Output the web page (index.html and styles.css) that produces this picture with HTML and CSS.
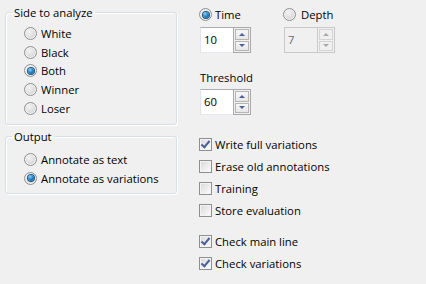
FILE: index.html
```html
<!DOCTYPE html>
<html>
<head>
<meta charset="utf-8">
<link rel="stylesheet" href="styles.css">
</head>
<body>
<div class="dialog">
  <div class="left">
    <fieldset class="group group-side">
      <legend>Side to analyze</legend>
      <div class="options">
        <label class="opt"><span class="radio"></span>White</label>
        <label class="opt"><span class="radio"></span>Black</label>
        <label class="opt"><span class="radio on"></span>Both</label>
        <label class="opt"><span class="radio"></span>Winner</label>
        <label class="opt"><span class="radio"></span>Loser</label>
      </div>
    </fieldset>
    <fieldset class="group group-out">
      <legend>Output</legend>
      <div class="options">
        <label class="opt"><span class="radio"></span>Annotate as text</label>
        <label class="opt"><span class="radio on"></span>Annotate as variations</label>
      </div>
    </fieldset>
  </div>
  <div class="right">
    <div class="mode">
      <div class="mode-col">
        <label class="opt top-opt"><span class="radio on"></span>Time</label>
        <div class="spin"><span class="val">10</span><span class="btns"><span class="btn up"></span><span class="btn down"></span></span></div>
      </div>
      <div class="mode-col">
        <label class="opt top-opt depth"><span class="radio"></span>Depth</label>
        <div class="spin disabled"><span class="val">7</span><span class="btns"><span class="btn up"></span><span class="btn down"></span></span></div>
      </div>
    </div>
    <div class="thr-label">Threshold</div>
    <div class="spin thr"><span class="val">60</span><span class="btns"><span class="btn up"></span><span class="btn down"></span></span></div>
    <div class="checks first">
      <label class="chk"><span class="box on"></span>Write full variations</label>
      <label class="chk"><span class="box"></span>Erase old annotations</label>
      <label class="chk"><span class="box"></span>Training</label>
      <label class="chk"><span class="box"></span>Store evaluation</label>
    </div>
    <div class="checks second">
      <label class="chk"><span class="box on"></span>Check main line</label>
      <label class="chk"><span class="box on"></span>Check variations</label>
    </div>
  </div>
</div>
</body>
</html>
```
FILE: styles.css
```css
html, body {
  margin: 0;
  padding: 0;
  background: #f0f0f0;
  width: 426px;
  height: 284px;
  overflow: hidden;
}
body {
  font-family: "Open Sans", "Noto Sans", sans-serif;
  font-size: 11.3px;
  color: #000;
}
.dialog {
  display: flex;
  padding: 5px 0 0 5px;
}
.left {
  width: 172px;
  display: flex;
  flex-direction: column;
}
.group {
  margin: 0;
  padding: 0;
  border: 1px solid #d5dfe5;
  border-radius: 3px;
  box-shadow: inset 1px 1px 0 #fff, 1px 1px 0 #fff;
}
.group legend {
  margin-left: 6px;
  padding: 0 2px;
  line-height: 15px;
  height: 15px;
}
.group-side { height: 120px; box-sizing: border-box; }
.group-out { height: 65px; box-sizing: border-box; margin-top: 4px; }
.options {
  display: flex;
  flex-direction: column;
  padding: 4px 0 0 18px;
}
.group-out .options { padding-top: 6px; }
.opt {
  display: flex;
  align-items: center;
  height: 18.75px;
  gap: 4px;
}
.radio {
  width: 13px;
  height: 13px;
  box-sizing: border-box;
  border-radius: 50%;
  border: 1px solid #8e8f8f;
  background: radial-gradient(circle at 40% 35%, #f4f4f4 0%, #dcdcdc 55%, #c4c4c4 100%);
  box-shadow: inset 0 0 0 1px #f4f4f4;
  flex: none;
  display: flex;
  align-items: center;
  justify-content: center;
}
.radio.on::after {
  content: "";
  width: 6px;
  height: 6px;
  border-radius: 50%;
  background: radial-gradient(circle at 35% 30%, #8ad3f7 0%, #2b88c7 45%, #0a4e86 100%);
  box-shadow: 0 0 0 1px #1a5a8c;
}
.right {
  margin-left: 22px;
  display: flex;
  flex-direction: column;
}
.mode {
  display: flex;
}
.mode-col {
  width: 84px;
  display: flex;
  flex-direction: column;
}
.top-opt { height: 19px; gap: 3px; }
.depth { gap: 5px; }
.spin {
  width: 51px;
  height: 26px;
  box-sizing: border-box;
  margin: 3px 0 0 1px;
  display: flex;
  background: #fff;
  border: 1px solid #abadb3;
  border-left-color: #e2e3ea;
  border-bottom-color: #e3e9ef;
}
.spin.thr { margin-top: 4px; }
.spin .val {
  flex: 1;
  padding: 4px 0 0 3px;
  line-height: 15px;
}
.spin .btns {
  width: 18px;
  display: flex;
  flex-direction: column;
  margin: -1px -1px -1px 0;
  background: #f0f0f0;
  border: 1px solid #a9a9a9;
  box-sizing: border-box;
  padding: 1px;
  gap: 1px;
}
.spin .btn {
  flex: 1;
  background: linear-gradient(#f7f7f7, #e6e6e6);
  border: 1px solid #b5b5b5;
  display: flex;
  align-items: center;
  justify-content: center;
}
.btn.up::after {
  content: "";
  border-left: 3px solid transparent;
  border-right: 3px solid transparent;
  border-bottom: 3px solid #4c5f9a;
}
.btn.down::after {
  content: "";
  border-left: 3px solid transparent;
  border-right: 3px solid transparent;
  border-top: 3px solid #4c5f9a;
}
.spin.disabled {
  background: #f0f0f0;
  border-color: #c9c9c9;
  color: #6d6d6d;
}
.spin.disabled .btns { border-color: #c9c9c9; }
.spin.disabled .btn { border-color: #d4d4d4; background: #f0f0f0; }
.spin.disabled .btn.up::after { border-bottom-color: #a8a8a8; }
.spin.disabled .btn.down::after { border-top-color: #a8a8a8; }
.thr-label {
  margin-top: 17px;
  height: 15px;
  line-height: 15px;
  padding-left: 1px;
}
.checks {
  display: flex;
  flex-direction: column;
}
.checks.first { margin-top: 18px; }
.checks.second { margin-top: 9px; }
.chk {
  display: flex;
  align-items: center;
  height: 22px;
  gap: 3px;
}
.box {
  width: 13px;
  height: 13px;
  box-sizing: border-box;
  border: 1px solid #8e8f8f;
  background: linear-gradient(135deg, #d8d8d8 0%, #f2f2f2 70%, #ffffff 100%);
  box-shadow: inset 0 0 0 1px #f4f4f4;
  flex: none;
  position: relative;
}
.box.on::after {
  content: "";
  position: absolute;
  left: 3px;
  top: 0px;
  width: 3px;
  height: 7px;
  border: solid #4a5f97;
  border-width: 0 2px 2px 0;
  transform: rotate(40deg);
}
```
